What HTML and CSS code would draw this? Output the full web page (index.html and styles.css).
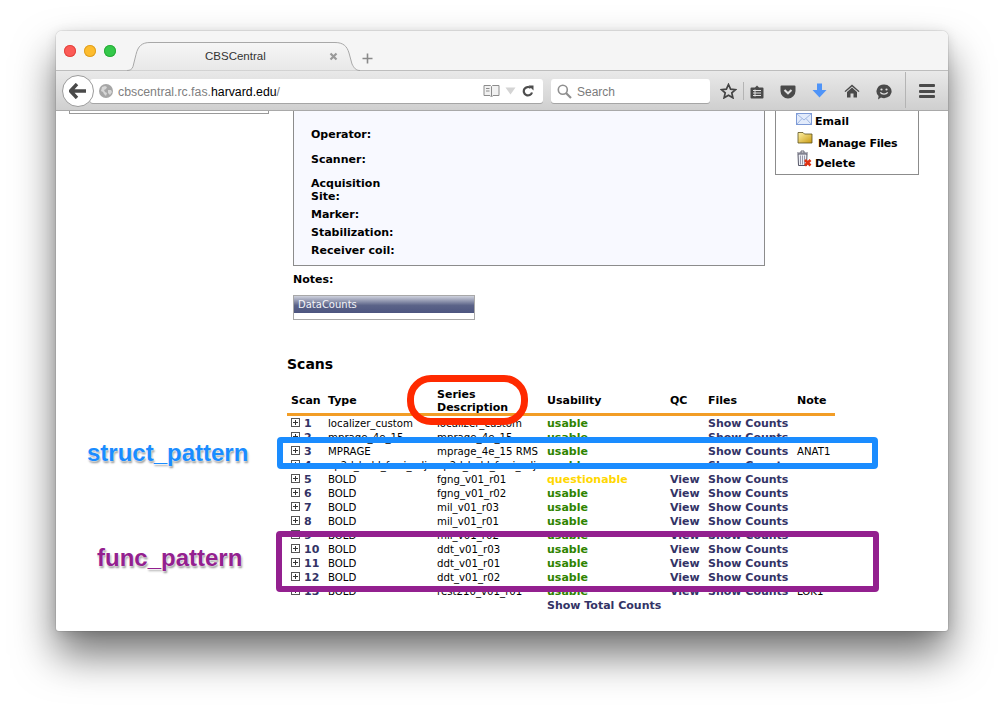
FILE: index.html
```html
<!DOCTYPE html>
<html lang="en">
<head>
<meta charset="utf-8">
<title>CBSCentral</title>
<link rel="stylesheet" href="styles.css">
</head>
<body>
<div class="window">
  <header class="tabbar">
    <div class="lights"><i class="light red"></i><i class="light yellow"></i><i class="light green"></i></div>
    <div class="tab">
      <svg class="tab-shape" width="233" height="30" viewBox="0 0 233 30"><defs><linearGradient id="tg" x1="0" y1="0" x2="0" y2="1"><stop offset="0" stop-color="#f6f6f6"/><stop offset="1" stop-color="#e8e8e8"/></linearGradient></defs><path d="M0 29.500c3 0 5-1 6-4l3-12C11 5 15 1.500 23 1.500H208C216 1.500 220 5 222 12l3 11c2 4 4 6.500 8 6.500" fill="url(#tg)" stroke="#a8a8a8"/></svg>
      <span class="tab-title">CBSCentral</span>
      <svg class="tab-close" width="9" height="9" viewBox="0 0 9 9"><path d="M1.500 1.500l6 6M7.500 1.500l-6 6" stroke="#999" stroke-width="2.200"/></svg>
    </div>
    <svg class="tab-new" width="11" height="11" viewBox="0 0 11 11"><path d="M5.500 0.500v10M0.500 5.500h10" stroke="#8a8a8a" stroke-width="1.600"/></svg>
  </header>

  <nav class="toolbar">
    <div class="back"><svg width="18" height="16" viewBox="0 0 18 16"><path d="M8 1L1.500 8 8 15M2 8h15" fill="none" stroke="#4a4a4a" stroke-width="3.400"/></svg></div>
    <div class="urlbar">
      <svg class="globe" width="14" height="14" viewBox="0 0 14 14"><circle cx="7" cy="7" r="7" fill="#a6a6a6"/><path d="M3 3l3-1 2 1-1 2-2 1 1 2 2 1-1 3-2-2-1-2-2-1zM9 6l3 0 1 2-2 3-2-2z" fill="#d6d6d6"/></svg>
      <span class="url"><span class="url-dim">cbscentral.rc.fas.</span>harvard.edu<span class="url-dim">/</span></span>
      <svg class="reader" width="17" height="14" viewBox="0 0 17 14"><path d="M1 1.500h6.500l1 1 1-1H16v10H10l-1.500 1.500L7 11.500H1zM8.500 3v9M3 4.500h3.500M3 7h3.500" fill="#f1f1f1" stroke="#8c8c8c"/></svg>
      <svg class="caret" width="11" height="8" viewBox="0 0 11 8"><path d="M0.500 0.500h10L5.500 7.500z" fill="#d4d4d4"/></svg>
      <svg class="reload" width="12" height="12" viewBox="0 0 12 12"><path d="M10 7.500A4.200 4.200 0 1 1 8.700 3" fill="none" stroke="#4d4d4d" stroke-width="2.200"/><path d="M6.500 0.500h5v5z" fill="#4d4d4d"/></svg>
    </div>
    <div class="searchbar">
      <svg width="15" height="15" viewBox="0 0 15 15"><circle cx="5.800" cy="5.800" r="4.500" fill="none" stroke="#8f8f8f" stroke-width="1.600"/><path d="M9 9l5 5" stroke="#8f8f8f" stroke-width="2.200"/></svg>
      <span class="search-text">Search</span>
    </div>
    <div class="tools">
      <svg class="ic-star" width="17" height="16" viewBox="0 0 17 16"><path d="M8.500 1.500l2.100 4.600 5 .5-3.800 3.300 1.100 4.900-4.400-2.600-4.400 2.600 1.100-4.900L1.400 6.600l5-.5z" fill="none" stroke="#444" stroke-width="1.700"/></svg>
      <i class="vsep short"></i>
      <svg class="ic-list" width="14" height="14" viewBox="0 0 14 14"><path d="M1.500 2.500h3.500l2-2 2 2h3.500a1 1 0 0 1 1 1v9a1 1 0 0 1-1 1h-11a1 1 0 0 1-1-1v-9a1 1 0 0 1 1-1z" fill="#4a4a4a"/><path d="M3 5.500h8M3 8h8M3 10.500h8M5 4.500v7" stroke="#e0e0e0"/></svg>
      <svg class="ic-pocket" width="16" height="14" viewBox="0 0 16 14"><path d="M1.500 0.500h13a1 1 0 0 1 1 1V6a7.500 7.500 0 0 1-15 0V1.500a1 1 0 0 1 1-1z" fill="#4a4a4a"/><path d="M4.500 5L8 8.300 11.500 5" fill="none" stroke="#e0e0e0" stroke-width="2"/></svg>
      <svg class="ic-down" width="15" height="15" viewBox="0 0 15 15"><path d="M5 0.500h5V7h4.500l-7 7.500-7-7.500H5z" fill="#4f94f8"/></svg>
      <svg class="ic-home" width="16" height="14" viewBox="0 0 16 14"><path d="M8 0.500l7.500 6.700-1 .9L8 2.500 1.500 8.100l-1-.9z" fill="#4a4a4a"/><path d="M8 3.500l5 4.400v5.600H9.500V9.500h-3v4H3V7.900z" fill="#4a4a4a"/></svg>
      <svg class="ic-smile" width="16" height="16" viewBox="0 0 16 16"><path d="M8 0.500a7.500 6.800 0 1 1-3 13l-3 2 .6-3.500A7.500 6.800 0 0 1 8 0.500z" fill="#4a4a4a"/><circle cx="5.500" cy="5.500" r="1.100" fill="#e0e0e0"/><circle cx="10.500" cy="5.500" r="1.100" fill="#e0e0e0"/><path d="M4.300 8.300c1.500 2.300 5.900 2.300 7.400 0" fill="none" stroke="#e0e0e0" stroke-width="1.300"/></svg>
      <i class="vsep tall"></i>
      <div class="burger"><i></i><i></i><i></i></div>
    </div>
  </nav>

  <main class="content">
    <aside class="side-stub"></aside>
    <div class="main-col">
      <div class="top-row">
        <section class="info">
          <div class="info-label first">Operator:</div>
          <div class="info-label">Scanner:</div>
          <div class="info-label acq">Acquisition Site:</div>
          <div class="info-label tight">Marker:</div>
          <div class="info-label tight">Stabilization:</div>
          <div class="info-label tight">Receiver coil:</div>
        </section>
        <section class="actions">
          <div class="action a-email">
            <svg width="16" height="12" viewBox="0 0 16 12"><rect x="0.500" y="0.500" width="15" height="11" fill="#e2ebfb" stroke="#7d9ad6"/><path d="M1 1l7 6 7-6M1 11l5-5.500M15 11l-5-5.500" fill="none" stroke="#9fb6e2"/></svg>
            <span>Email</span>
          </div>
          <div class="action a-files">
            <svg width="16" height="13" viewBox="0 0 16 13"><defs><linearGradient id="fg" x1="0" y1="0" x2="1" y2="1"><stop offset="0" stop-color="#fff2a8"/><stop offset="1" stop-color="#c99a10"/></linearGradient></defs><path d="M1 1.500h5l1.500 1.500H15V12H1z" fill="url(#fg)" stroke="#5a5020" stroke-width="0.800"/></svg>
            <span>Manage Files</span>
          </div>
          <div class="action a-delete">
            <svg width="16" height="17" viewBox="0 0 16 17"><path d="M1 3h11M5 3V1h3v2" fill="none" stroke="#667" /><path d="M2 4h9l-.5 11.500h-8z" fill="#eef0f6" stroke="#556"/><path d="M4.500 5.500v9M6.500 5.500v9M8.500 5.500v9" stroke="#99a"/><path d="M9 10l5.500 5.500M14.500 10L9 15.500" stroke="#e03010" stroke-width="2.600"/></svg>
            <span>Delete</span>
          </div>
        </section>
      </div>

      <div class="notes">Notes:</div>
      <div class="counts-box"><div class="counts-head">DataCounts</div></div>

      <h2 class="scans-title">Scans</h2>

      <table class="scans">
        <colgroup><col class="c-scan"><col class="c-type"><col class="c-desc"><col class="c-use"><col class="c-qc"><col class="c-files"><col class="c-note"></colgroup>
        <thead>
          <tr><th><div>Scan</div></th><th><div>Type</div></th><th><div class="two">Series<br>Description</div></th><th><div>Usability</div></th><th><div>QC</div></th><th><div>Files</div></th><th><div>Note</div></th></tr>
        </thead>
        <tbody>
          <tr><td class="num"><i class="plus"></i>1</td><td>localizer_custom</td><td>localizer_custom</td><td class="ok">usable</td><td></td><td class="lnk">Show Counts</td><td></td></tr>
          <tr><td class="num"><i class="plus"></i>2</td><td>mprage_4e_15</td><td>mprage_4e_15</td><td class="ok">usable</td><td></td><td class="lnk">Show Counts</td><td></td></tr>
          <tr><td class="num"><i class="plus"></i>3</td><td>MPRAGE</td><td>mprage_4e_15 RMS</td><td class="ok">usable</td><td></td><td class="lnk">Show Counts</td><td>ANAT1</td></tr>
          <tr><td class="num"><i class="plus"></i>4</td><td>ep2d_bold_fmri_adj</td><td>ep2d_bold_fmri_adj</td><td class="ok">usable</td><td></td><td class="lnk">Show Counts</td><td></td></tr>
          <tr><td class="num"><i class="plus"></i>5</td><td>BOLD</td><td>fgng_v01_r01</td><td class="warn">questionable</td><td class="lnk">View</td><td class="lnk">Show Counts</td><td></td></tr>
          <tr><td class="num"><i class="plus"></i>6</td><td>BOLD</td><td>fgng_v01_r02</td><td class="ok">usable</td><td class="lnk">View</td><td class="lnk">Show Counts</td><td></td></tr>
          <tr><td class="num"><i class="plus"></i>7</td><td>BOLD</td><td>mil_v01_r03</td><td class="ok">usable</td><td class="lnk">View</td><td class="lnk">Show Counts</td><td></td></tr>
          <tr><td class="num"><i class="plus"></i>8</td><td>BOLD</td><td>mil_v01_r01</td><td class="ok">usable</td><td class="lnk">View</td><td class="lnk">Show Counts</td><td></td></tr>
          <tr><td class="num"><i class="plus"></i>9</td><td>BOLD</td><td>mil_v01_r02</td><td class="ok">usable</td><td class="lnk">View</td><td class="lnk">Show Counts</td><td></td></tr>
          <tr><td class="num"><i class="plus"></i>10</td><td>BOLD</td><td>ddt_v01_r03</td><td class="ok">usable</td><td class="lnk">View</td><td class="lnk">Show Counts</td><td></td></tr>
          <tr><td class="num"><i class="plus"></i>11</td><td>BOLD</td><td>ddt_v01_r01</td><td class="ok">usable</td><td class="lnk">View</td><td class="lnk">Show Counts</td><td></td></tr>
          <tr><td class="num"><i class="plus"></i>12</td><td>BOLD</td><td>ddt_v01_r02</td><td class="ok">usable</td><td class="lnk">View</td><td class="lnk">Show Counts</td><td></td></tr>
          <tr><td class="num"><i class="plus"></i>13</td><td>BOLD</td><td>rest210_v01_r01</td><td class="ok">usable</td><td class="lnk">View</td><td class="lnk">Show Counts</td><td>LOK1</td></tr>
          <tr><td colspan="3"></td><td colspan="4" class="lnk">Show Total Counts</td></tr>
        </tbody>
      </table>
    </div>
  </main>

  <div class="mark mark-red"></div>
  <div class="mark mark-blue"></div>
  <div class="mark mark-purple"></div>
  <div class="callout callout-struct">struct_pattern</div>
  <div class="callout callout-func">func_pattern</div>
</div>
</body>
</html>
```
FILE: styles.css
```css
* { box-sizing: border-box; }
html, body { margin: 0; height: 711px; overflow: hidden; background: #fff; }
body { padding: 31px 56px 0; font-family: "DejaVu Sans", Verdana, sans-serif; font-size: 11px; color: #000; }

.window {
  position: relative;
  width: 892px;
  height: 600px;
  border-radius: 6px 6px 3px 3px;
  background: #fff;
  overflow: visible;
  box-shadow: 0 0 0 1px rgba(0,0,0,.07), 0 24px 42px rgba(0,0,0,.55), 0 2px 12px rgba(0,0,0,.12);
}

/* Tab strip */
.tabbar {
  position: relative;
  height: 40px;
  background: #f5f5f5;
  border-bottom: 1px solid #bdbdbd;
  border-radius: 6px 6px 0 0;
}
.lights { display: flex; gap: 8px; padding: 14px 0 0 8px; }
.light { width: 12px; height: 12px; border-radius: 50%; }
.light.red { background: #fc5b57; box-shadow: inset 0 0 0 1px #e2463f; }
.light.yellow { background: #fdbc2e; box-shadow: inset 0 0 0 1px #dfa023; }
.light.green { background: #34c84a; box-shadow: inset 0 0 0 1px #2aac3a; }
.tab { position: absolute; left: 71px; top: 10px; width: 233px; height: 30px; }
.tab-shape { position: absolute; left: 0; top: 0; }
.tab-title {
  position: absolute; left: 78px; top: 8px;
  font: 11.500px/14px "Liberation Sans", Arial, sans-serif; color: #333;
}
.tab-close { position: absolute; left: 202px; top: 11px; }
.tab-new { position: absolute; left: 306px; top: 22px; }

/* Toolbar */
.toolbar {
  position: relative;
  display: flex;
  align-items: center;
  height: 40px;
  padding: 1px 0 0 6px;
  background: linear-gradient(#e9e9e9, #cfcfcf);
  border-bottom: 1px solid #a9a9a9;
}
.back {
  position: relative; z-index: 1;
  display: flex; align-items: center; justify-content: center;
  flex: none;
  width: 32px; height: 32px;
  border-radius: 50%;
  background: #fff;
  border: 1px solid #9b9b9b;
}
.urlbar, .searchbar {
  display: flex; align-items: center;
  height: 24px;
  background: #fff;
  border-radius: 3px;
  box-shadow: 0 1px 0 #a5a5a5;
  font-family: "Liberation Sans", Arial, sans-serif;
}
.urlbar { flex: none; width: 453px; margin-left: -4px; padding-left: 9px; font-size: 12.300px; }
.globe { flex: none; }
.url { margin: 2px 0 0 5px; color: #000; flex: 1; }
.url-dim { color: #808080; }
.reader { margin-right: 5px; }
.caret { margin-right: 6px; }
.reload { margin-right: 9px; }
.searchbar { flex: none; width: 159px; margin-left: 8px; padding-left: 6px; font-size: 12px; color: #7b7b7b; gap: 5px; }
.search-text { margin-top: 2px; }
.tools { position: relative; flex: 1; height: 100%; }
.tools > svg, .tools > i, .burger { position: absolute; }
.ic-star { left: 10px; top: 11px; }
.vsep { width: 1px; background: #b4b4b4; }
.vsep.short { left: 33px; top: 10px; height: 18px; }
.ic-list { left: 40px; top: 13px; }
.ic-pocket { left: 70px; top: 13px; }
.ic-down { left: 102px; top: 11px; }
.ic-home { left: 134px; top: 12px; }
.ic-smile { left: 166px; top: 12px; }
.vsep.tall { left: 195px; top: 0; height: 36px; }
.burger { left: 209px; top: 12px; width: 16px; display: flex; flex-direction: column; gap: 2.500px; }
.burger i { height: 3px; background: #4a4a4a; border-radius: 1px; }

/* Page content */
.content {
  display: flex;
  height: 520px;
  padding-left: 13px;
  overflow: hidden;
  border-radius: 0 0 3px 3px;
}
.side-stub {
  flex: none;
  width: 200px; height: 3px;
  border: 1px solid #999;
  border-top: 0;
}
.main-col { flex: none; width: 632px; margin-left: 18px; }
.top-row { display: flex; align-items: flex-start; margin-left: 6px; }
.info {
  flex: none;
  width: 472px; height: 155px;
  padding-left: 17px;
  background: #f8f9ff;
  border: 1px solid #8c8c8c;
  border-top: 0;
}
.info-label { width: 85px; font-weight: bold; line-height: 13px; margin-top: 12px; }
.info-label.first { margin-top: 17px; }
.info-label.acq { margin-top: 11px; }
.info-label.tight { margin-top: 5px; }
.actions {
  flex: none;
  width: 144px; height: 64px;
  margin-left: 10px;
  border: 1px solid #8c8c8c;
  border-top: 0;
  font-weight: bold;
  position: relative;
}
.action { position: absolute; display: flex; align-items: flex-end; }
.action span { line-height: 13px; }
.a-email { left: 20px; top: 2px; }
.a-email span { margin: 0 0 -3px 3px; }
.a-files { left: 21px; top: 20px; }
.a-files span { margin: 0 0 -6px 5px; letter-spacing: -.2px; }
.a-delete { left: 20px; top: 39px; }
.a-delete span { margin: 0 0 -3px 3px; }

.notes { margin: 7px 0 0 6px; font-weight: bold; line-height: 13px; }
.counts-box {
  width: 182px; height: 25px;
  margin: 9px 0 0 6px;
  border: 1px solid #a8a8a8;
  background: #fff;
}
.counts-head {
  height: 17px;
  padding-left: 4px;
  font-size: 10px;
  line-height: 18px;
  color: #f4f4f8;
  background: linear-gradient(#cfd2dd, #5b6388 55%, #4d5580);
}
.scans-title { margin: 36px 0 0; font-size: 14px; line-height: 17px; font-weight: bold; }

.scans {
  table-layout: fixed;
  width: 548px;
  margin-top: 14px;
  border-collapse: collapse;
  line-height: 14px;
  white-space: nowrap;
}
.c-scan { width: 37px; }
.c-type { width: 109px; }
.c-desc { width: 110px; }
.c-use { width: 123px; }
.c-qc { width: 38px; }
.c-files { width: 89px; }
.c-note { width: 42px; }
.scans th {
  padding: 0 0 0 4px;
  text-align: left;
  font-weight: bold;
  vertical-align: middle;
  border-bottom: 3px solid #f29d26;
}
.scans th div { line-height: 13px; }
.scans th div.two { margin: 1px 0 -1px; }
.scans td { padding: 0 0 0 4px; height: 14px; overflow: visible; font-size: 10.200px; }
.scans tbody tr:first-child td { padding-top: 1px; height: 15px; }
.scans td.num, .scans td.ok, .scans td.warn, .scans td.lnk { font-size: 11px; font-weight: bold; }
.num, .lnk { color: #333366; }
.plus {
  display: inline-block;
  position: relative;
  width: 9px; height: 9px;
  margin-right: 4px;
  border: 1px solid #555;
  background: linear-gradient(#333, #333) center / 5px 1px no-repeat, linear-gradient(#333, #333) center / 1px 5px no-repeat, #fff;
}
.ok { color: #2f8400; }
.warn { color: #ffd700; }

/* Annotations drawn over the screenshot */
.mark { position: absolute; z-index: 2; }
.mark-red {
  left: 351px; top: 344px;
  width: 121px; height: 50px;
  border: 7px solid #ff2a00;
  border-radius: 24px;
}
.mark-blue {
  left: 221px; top: 406px;
  width: 601px; height: 32px;
  border: 6.500px solid #1a8cff;
  border-radius: 4px;
}
.mark-purple {
  left: 220px; top: 500px;
  width: 603px; height: 61px;
  border: 6.500px solid #93208f;
  border-radius: 4px;
}
.callout {
  position: absolute; z-index: 2;
  font: bold 24px/28px "Liberation Sans", Arial, sans-serif;
  text-shadow: 0 0 2px #fff, 0 0 2px #fff, 1px 2px 2px rgba(0,0,0,.45);
  white-space: nowrap;
}
.callout-struct { left: 31px; top: 408px; color: #1a8cff; }
.callout-func { left: 41px; top: 513px; color: #93208f; }
```
